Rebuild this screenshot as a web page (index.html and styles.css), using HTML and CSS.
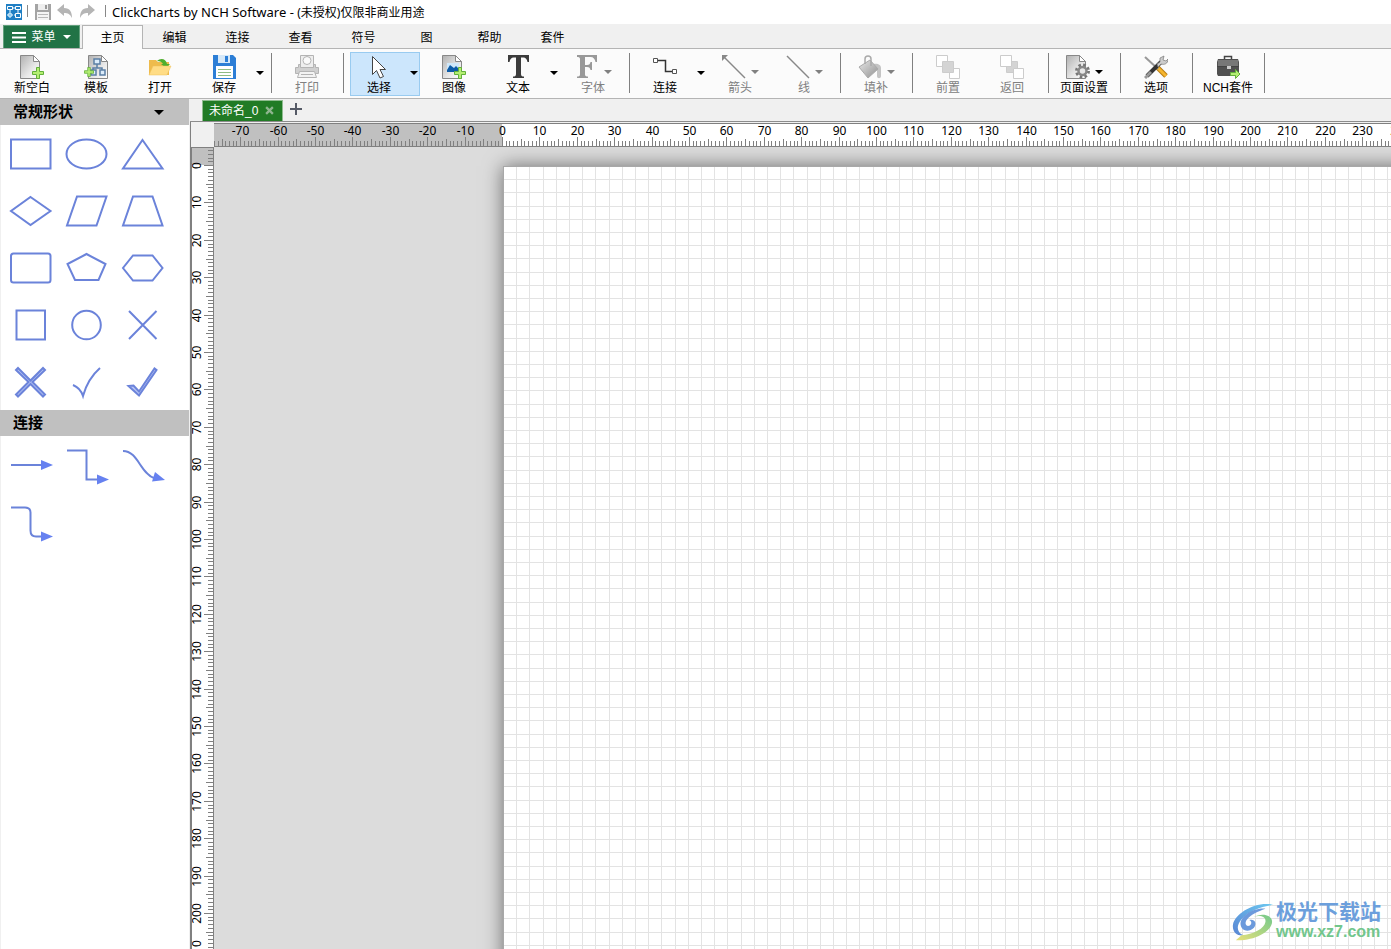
FILE: index.html
```html
<!DOCTYPE html>
<html lang="zh-CN">
<head>
<meta charset="utf-8">
<title>ClickCharts by NCH Software</title>
<link rel="stylesheet" href="styles.css">
</head>
<body>
<svg class="defs" aria-hidden="true">
  <defs>
    <linearGradient id="paper" x1="0" y1="0" x2="1" y2="1"><stop offset="0" stop-color="#b0b0b0"/><stop offset=".6" stop-color="#e8e8e8"/><stop offset="1" stop-color="#ffffff"/></linearGradient>
    <linearGradient id="metal" x1="0" y1="0" x2="1" y2="1"><stop offset="0" stop-color="#e8e8e8"/><stop offset="1" stop-color="#909090"/></linearGradient>
    <linearGradient id="swirl" x1="0" y1="1" x2="1" y2="0"><stop offset="0" stop-color="#5a86d4"/><stop offset="1" stop-color="#6cc8f0"/></linearGradient>
    <linearGradient id="leaf" x1="0" y1="1" x2="1" y2="0"><stop offset="0" stop-color="#e8e07a"/><stop offset="1" stop-color="#72c98c"/></linearGradient>
    <symbol id="plus" viewBox="0 0 12 12"><path d="M4.500 .5h3v4h4v3h-4v4h-3v-4h-4v-3h4z" fill="#b4ee72" stroke="#62b03a"/></symbol>
    <symbol id="caret" viewBox="0 0 8 4"><path d="M0 0h8L4 4z" fill="currentColor"/></symbol>
    <symbol id="page" viewBox="0 0 24 24"><path d="M1.500 .5h13l6 6v17h-19z" fill="url(#paper)" stroke="#888"/><path d="M14.500 .5v6h6z" fill="#fff" stroke="#888"/></symbol>
  </defs>
</svg>

<header class="titlebar">
  <svg class="app-icon" viewBox="0 0 16 16"><path d="M0 0h16v16H0z" fill="#1f7fc4"/><g fill="none" stroke="#fff"><path d="M1.500 2.500h5v3h-5zM9.500 2.500h5v3h-5zM9.500 9.500h5v4h-5zM6.500 4h3M4 6v2M12 6v3M8 11h1"/><path d="M4 8.500L6.500 11 4 13.500 1.500 11z" fill="#8cd0f5"/></g></svg>
  <span class="bar"></span>
  <button class="quick" aria-label="保存"><svg viewBox="0 0 18 18"><path d="M1 1h16v16H1z" fill="#a4a4a4"/><path d="M4 1h10v6H4z" fill="#eee"/><path d="M11 2h2v4h-2z" fill="#999"/><path d="M3 9h12v8H3z" fill="#f4f4f4"/><path d="M4 11.500h10M4 14.500h10" stroke="#b8b8b8"/></svg></button>
  <button class="quick" aria-label="撤消"><svg viewBox="0 0 18 18"><path d="M1 7l7-6v4c6 0 8 4 8 10-2-4-4-5-8-5v3z" fill="#b5b5b5"/></svg></button>
  <button class="quick" aria-label="重做"><svg viewBox="0 0 18 18"><path d="M17 7l-7-6v4C4 5 2 9 2 15c2-4 4-5 8-5v3z" fill="#b5b5b5"/></svg></button>
  <span class="bar"></span>
  <h1 class="title">ClickCharts by NCH Software - <span class="license">(未授权)仅限非商业用途</span></h1>
</header>

<nav class="menubar">
  <button class="menu-main"><svg class="burger" viewBox="0 0 14 11"><path d="M0 1h14M0 5.500h14M0 10h14" stroke="#fff" stroke-width="2"/></svg>菜单<svg class="caret"><use href="#caret"/></svg></button>
  <button class="menu-tab current">主页</button>
  <button class="menu-tab">编辑</button>
  <button class="menu-tab">连接</button>
  <button class="menu-tab">查看</button>
  <button class="menu-tab">符号</button>
  <button class="menu-tab">图</button>
  <button class="menu-tab">帮助</button>
  <button class="menu-tab">套件</button>
</nav>

<div class="toolbar" role="toolbar">
  <button class="tool"><span class="icon-row"><svg class="icon"><use href="#page" x="-1"/><use href="#plus" x="12" y="12" width="12" height="12"/></svg></span>新空白</button>
  <button class="tool"><span class="icon-row"><svg class="icon"><use href="#page" x="3"/><g fill="#dcecfa" stroke="#5b7fa5" stroke-width="1.500"><path d="M13 9v4M9 16v-3h9v3" fill="none"/><path d="M10 4h6v5h-6zM7 15h5v5H7zM16 15h5v5h-5z"/></g><use href="#plus" x="0" y="12" width="10" height="10"/></svg></span>模板</button>
  <button class="tool"><span class="icon-row"><svg class="icon"><path d="M1 5h7l2 2h11v13H1z" fill="#eebb4c"/><path d="M9 6c3-3 9-3 10 3h3l-4 4-5-4h2c-1-2-3-3-6-3z" fill="#4fae2e"/><path d="M1 20l4-9h18l-4 9z" fill="#ffdc85" stroke="#efc05a" stroke-width=".5"/></svg></span>打开</button>
  <button class="tool"><span class="icon-row"><svg class="icon"><path d="M1 0h20l3 3v21H1z" fill="#2c7ed6"/><path d="M6 0h12v8H6z" fill="#d5e8f8"/><path d="M13 1h3v6h-3z" fill="#2c7ed6"/><path d="M4 11h17v12H4z" fill="#fff"/><path d="M6 14.500h13M6 17.500h13M6 20.500h13" stroke="#8fbc84"/></svg></span>保存</button>
  <button class="drop" aria-label="保存选项"><svg class="caret"><use href="#caret"/></svg></button>
  <span class="sep"></span>
  <button class="tool" disabled><span class="icon-row"><svg class="icon"><g stroke="#b4b4b4"><path d="M5.500 .5h13v12h-13z" fill="#eee"/><circle cx="12" cy="5.500" r="4" fill="#fafafa"/><path d="M.5 12.500h3v-3h2v3h13v-3h2v3h3v6H.5z" fill="#d0d0d0"/><path d="M4.500 16.500h15l2 6h-19z" fill="#f3f3f3"/><path d="M6 19.500h12"/></g></svg></span>打印</button>
  <span class="sep"></span>
  <div class="tool-pair selected">
    <button class="tool" aria-pressed="true"><span class="icon-row"><svg class="icon"><path d="M5.500 1.500v18l4-4 3.500 7.500 3.500-1.500-3.500-7h5.500z" fill="#fff" stroke="#444"/></svg></span>选择</button>
    <button class="drop" aria-label="选择选项"><svg class="caret"><use href="#caret"/></svg></button>
  </div>
  <button class="tool"><span class="icon-row"><svg class="icon"><use href="#page" x="-1"/><path d="M5 8h12v9H5z" fill="#cfe8fa"/><path d="M5 15l3-5 4 3 2-2 3 3v3H5z" fill="#0d5ca8"/><use href="#plus" x="12" y="12" width="12" height="12"/></svg></span>图像</button>
  <button class="tool"><span class="icon-row"><svg class="icon"><path d="M2 0h21v7h-1.500c-.5-3-2-4.500-4-4.500H15V19c0 2 1 2.500 3 2.500V23H7v-1.500c2 0 3-.5 3-2.500V2.500H7.500c-2 0-3.500 1.500-4 4.500H2z" fill="#3c3c3c"/></svg></span>文本</button>
  <button class="drop" aria-label="文本选项"><svg class="caret"><use href="#caret"/></svg></button>
  <button class="tool" disabled><span class="icon-row"><svg class="icon"><path d="M2 0h20v7h-1.500c-.5-3-2-5-5-5H10v8h2c2.500 0 3-1 3.500-3H17v8h-1.500c-.5-2-1-3-3.500-3h-2v7.500c0 1.500 1 2 3 2V23H2v-1.500c2 0 3-.5 3-2V4c0-1.500-1-2-3-2z" fill="#999"/></svg><svg class="caret"><use href="#caret"/></svg></span>字体</button>
  <span class="sep"></span>
  <button class="tool"><span class="icon-row"><svg class="icon"><path d="M4 5.500h8.500v11H20" fill="none" stroke="#333" stroke-width="1.500"/><path d="M.5 3.500h4v4h-4zM19.500 14.500h4v4h-4z" fill="#fff" stroke="#555"/></svg></span>连接</button>
  <button class="drop" aria-label="连接选项"><svg class="caret"><use href="#caret"/></svg></button>
  <button class="tool" disabled><span class="icon-row"><svg class="icon"><path d="M2 2l21 21" stroke="#888" stroke-width="1.500"/><path d="M0 0h6L0 6z" fill="#888"/></svg><svg class="caret"><use href="#caret"/></svg></span>箭头</button>
  <button class="tool" disabled><span class="icon-row"><svg class="icon"><path d="M1 1l22 22" stroke="#888" stroke-width="1.500"/></svg><svg class="caret"><use href="#caret"/></svg></span>线</button>
  <span class="sep"></span>
  <button class="tool" disabled><span class="icon-row"><svg class="icon"><path d="M15 9c5-1 8 1 8 4v8c0 3-4 3-4 0v-6z" fill="#c4c4c4"/><path d="M1 12L12 5l8 9-10 9z" fill="url(#metal)" stroke="#aaa"/><path d="M7 9V4c0-4 6-4 6 0v7" fill="none" stroke="#aaa" stroke-width="1.500"/></svg><svg class="caret"><use href="#caret"/></svg></span>填补</button>
  <span class="sep"></span>
  <button class="tool" disabled><span class="icon-row"><svg class="icon"><g fill="#fff" stroke="#ccc"><path d="M.5.5h11v11H.5zM13.500 13.500h10v10h-10z"/><path d="M6.500 6.500h11v11h-11z" fill="#d4d4d4"/></g></svg></span>前置</button>
  <button class="tool" disabled><span class="icon-row"><svg class="icon"><g fill="#fff" stroke="#ccc"><path d="M6.500 6.500h11v11h-11z" fill="#d4d4d4"/><path d="M.5.5h11v11H.5zM13.500 13.500h10v10h-10z"/></g></svg></span>返回</button>
  <span class="sep"></span>
  <button class="tool"><span class="icon-row"><svg class="icon"><use href="#page" x="-1"/><circle cx="16.500" cy="16" r="6" fill="none" stroke="#777" stroke-width="3" stroke-dasharray="2.500 2.200"/><circle cx="16.500" cy="16" r="4" fill="#e8e8e8" stroke="#888" stroke-width="2.500"/></svg><svg class="caret"><use href="#caret"/></svg></span>页面设置</button>
  <span class="sep"></span>
  <button class="tool"><span class="icon-row"><svg class="icon"><path d="M13 12l9 9" stroke="#b57a10" stroke-width="5"/><path d="M13 12l9 9" stroke="#f5b52e" stroke-width="3"/><path d="M1 2l13 12" stroke="#999" stroke-width="2"/><path d="M3 21L17 7" stroke="#333" stroke-width="4"/><path d="M13 9l3-2V3l4-2-1 4 3 1 2-2c0 5-4 6-7 5l-3 3z" fill="#ccc" stroke="#777" stroke-width=".7"/><path d="M1 23l6-6" stroke="#999" stroke-width="3"/></svg></span>选项</button>
  <span class="sep"></span>
  <button class="tool"><span class="icon-row"><svg class="icon"><path d="M8.500 5V1.500h7V5" fill="none" stroke="#444" stroke-width="1.500"/><path d="M2 4h20l1 3v12l-2 2H2l-1-2V7z" fill="#505050"/><path d="M2 5h20v6H2z" fill="#777"/><path d="M1 11.500h22" stroke="#444"/><path d="M11 11h4v3h-4z" fill="#ccc"/><path d="M14.500 17.500h5v-3l4.500 4.500-4.500 4.500v-3h-5z" fill="#b4ee72" stroke="#62b03a"/></svg></span>NCH套件</button>
  <span class="sep"></span>
</div>

<main class="workspace">
  <aside class="palette">
    <h2 class="palette-head">常规形状<svg class="caret" viewBox="0 0 8 4"><use href="#caret"/></svg></h2>
    <div class="shapes">
      <button class="shape" aria-label="矩形"><svg><path d="M9 14.500h39.500v29H9z"/></svg></button>
      <button class="shape" aria-label="椭圆"><svg><ellipse cx="28.500" cy="29" rx="20" ry="14.500"/></svg></button>
      <button class="shape" aria-label="三角形"><svg><path d="M28.500 15L48.500 43.500H9z"/></svg></button>
      <button class="shape" aria-label="菱形"><svg><path d="M28.500 15l20 14-20 14L9 29z"/></svg></button>
      <button class="shape" aria-label="平行四边形"><svg><path d="M19 14.500h29.500l-10 29H9z"/></svg></button>
      <button class="shape" aria-label="梯形"><svg><path d="M19 14.500h19.500l10 29H9z"/></svg></button>
      <button class="shape" aria-label="圆角矩形"><svg><rect x="9" y="14.500" width="39.500" height="29" rx="2.500"/></svg></button>
      <button class="shape" aria-label="五边形"><svg><path d="M28.500 15l19 10-7 16H17L9.500 25z"/></svg></button>
      <button class="shape" aria-label="六边形"><svg><path d="M19 16.500h19.500L48.500 29l-10 12.500H19L9 29z"/></svg></button>
      <button class="shape" aria-label="正方形"><svg><path d="M14.500 14.500h28.500v29H14.500z"/></svg></button>
      <button class="shape" aria-label="圆形"><svg><circle cx="28.500" cy="29" r="14.300"/></svg></button>
      <button class="shape" aria-label="交叉"><svg><path d="M15 15l27.500 28M42.500 15L15 43"/></svg></button>
      <button class="shape" aria-label="粗交叉"><svg class="dense"><path d="M16 15l12.500 12.500L41 15l2 2-12.500 12L43 41.500l-2 2L28.500 31 16 43.500l-2-2L26.500 29 14 17z"/></svg></button>
      <button class="shape" aria-label="勾"><svg><path d="M15 32c5 2 8 5 10 11 3-11 9-21 17-28"/></svg></button>
      <button class="shape" aria-label="粗勾"><svg class="dense"><path d="M14.500 33l5-.5 5.500 6 15.500-23 2 1.500-17.500 25.500z"/></svg></button>
    </div>
    <h2 class="palette-head">连接</h2>
    <div class="shapes">
      <button class="shape" aria-label="直线箭头"><svg><path d="M9 29h31"/><path class="head" d="M39 24l12 5-12 5z"/></svg></button>
      <button class="shape" aria-label="折线箭头"><svg><path d="M9 14.500h19.500v29H40"/><path class="head" d="M39 38.500l12 5-12 5z"/></svg></button>
      <button class="shape" aria-label="曲线箭头"><svg><path d="M9 15c15 0 17 22 31 27"/><path class="head" d="M41 36l10 8-13 1.500z"/></svg></button>
      <button class="shape" aria-label="圆角折线箭头"><svg><path d="M9 14.500h14q5.500 0 5.500 5v18q0 6 5.500 6h6"/><path class="head" d="M39 38.500l12 5-12 5z"/></svg></button>
    </div>
  </aside>

  <section class="document">
    <div class="doc-tabs">
      <div class="doc-tab"><span>未命名_0</span><button class="close" aria-label="关闭"><svg viewBox="0 0 8 8"><path d="M1 1l6 6M7 1L1 7" stroke="#8fb58f" stroke-width="2"/></svg></button></div>
      <button class="add" aria-label="新建"><svg viewBox="0 0 12 12"><path d="M0 6h12M6 0v12" stroke="#555a66" stroke-width="2"/></svg></button>
    </div>
    <div class="sheet">
      <div class="corner"></div>
      <div class="ruler-h"><svg id="ruler-h"></svg></div>
      <div class="ruler-v"><svg id="ruler-v"></svg></div>
      <div class="canvas">
        <div class="paper"><svg id="grid"></svg></div>
      </div>
    </div>
    <div class="watermark">
      <svg class="mark" viewBox="0 0 44 40"><path d="M43 2C25-2 3 11 1 23c-1 8 5 12 11 11-7-3-8-10-2-17C17 9 29 4 43 2z" fill="url(#swirl)"/><path d="M35 6C20 5 8 15 9 23c1 7 9 8 14 3 4-5 0-10-5-8 3 1 3 5 0 6-4 1-5-4-2-7 4-5 11-8 19-11z" fill="#6c9adc"/><path d="M22 15c7-3 14-1 13 5-1 7-13 13-25 14l-6 5c18 1 37-8 38-19 0-8-11-10-20-5z" fill="url(#leaf)"/></svg>
      <div><div class="mark-name">极光下载站</div><div class="mark-url">www.xz7.com</div></div>
    </div>
  </section>
</main>
<script src="app.js"></script>
</body>
</html>
```

FILE: styles.css
```css
* { box-sizing: border-box; }
body {
  margin: 0;
  height: 100vh;
  display: flex;
  flex-direction: column;
  overflow: hidden;
  background: #f0f0f0;
  color: #000;
  font: 12px/16px "Liberation Sans", "Noto Sans CJK SC", sans-serif;
}
button {
  margin: 0;
  padding: 0;
  border: 0;
  background: none;
  color: inherit;
  font: inherit;
}
svg { display: block; }
h1, h2 { margin: 0; }
.defs { position: absolute; width: 0; height: 0; }
.caret { width: 8px; height: 4px; flex: none; }

.titlebar {
  display: flex;
  align-items: center;
  height: 24px;
  padding-left: 6px;
  background: #fff;
}
.app-icon { width: 16px; height: 16px; }
.bar { width: 1px; height: 12px; margin: 0 6px 2px 5px; background: #888; }
.quick { width: 18px; margin-right: 4px; }
.quick svg { width: 18px; height: 18px; }
.title {
  padding-top: 1px;
  font: 13px/16px "Noto Sans", "Noto Sans CJK SC", sans-serif;
  white-space: nowrap;
}
.license { font-size: 12px; }

.menubar {
  display: flex;
  height: 25px;
  padding: 1px 0 0 3px;
  border-bottom: 1px solid #b4b4b4;
}
.menu-main {
  display: flex;
  align-items: center;
  justify-content: center;
  gap: 5px;
  width: 77px;
  margin-right: 2px;
  background: #217346;
  border: 1px solid #63a07d;
  border-bottom: 0;
  color: #fff;
}
.burger { width: 14px; height: 11px; }
.menu-main .caret { margin-left: 2px; }
.menu-tab { width: 63px; padding-top: 2px; }
.menu-tab.current {
  width: 61px;
  height: 24px;
  padding-top: 0;
  background: #fbfbfb;
  border: 1px solid #b4b4b4;
  border-bottom: 0;
}

.toolbar {
  display: flex;
  height: 50px;
  padding-top: 3px;
  background: #fbfbfb;
  border-bottom: 1px solid #b4b4b4;
}
.tool {
  display: flex;
  flex: none;
  flex-direction: column;
  align-items: center;
  gap: 1px;
  width: 64px;
  height: 44px;
  padding-top: 3px;
  white-space: nowrap;
}
.tool:disabled { color: #808080; }
.icon-row { display: flex; align-items: center; gap: 5px; }
.icon-row .caret { margin-top: 10px; }
.icon { width: 24px; height: 24px; }
.drop {
  display: flex;
  align-items: center;
  width: 11px;
  height: 42px;
}
.sep { flex: none; width: 1px; height: 40px; margin: 1px 3px 0 4px; background: #808080; }
.tool-pair { display: flex; flex: none; margin: 0 2px 0 3px; }
.tool-pair .tool { width: 58px; }
.selected {
  width: 70px;
  height: 44px;
  background: #cce6fc;
  box-shadow: inset 0 0 0 1px #99cbf0;
}
.selected .drop { margin-left: 2px; }

.workspace { display: flex; flex: 1; min-height: 0; }
.palette {
  flex: none;
  width: 190px;
  background: #fff;
  border-left: 1px solid #f0f0f0;
  border-right: 1px solid #f0f0f0;
}
.palette-head {
  display: flex;
  align-items: center;
  justify-content: space-between;
  height: 26px;
  margin-left: -1px;
  padding: 0 25px 0 13px;
  background: #c0c0c0;
  font-size: 15px;
  font-weight: bold;
}
.shapes { display: grid; grid-template-columns: repeat(3, 56px); padding-left: 1px; }
.palette-head .caret { width: 10px; height: 5px; }
.shape { width: 56px; height: 57px; }
.shape svg {
  width: 56px;
  height: 57px;
  fill: none;
  stroke: #6b83da;
  stroke-width: 2px;
}
.shape .dense { fill: #b9c6f5; }
.shape .head { fill: #6681f0; stroke: none; }

.document {
  position: relative;
  display: flex;
  flex: 1;
  flex-direction: column;
  min-width: 0;
}
.doc-tabs {
  display: flex;
  height: 23px;
  padding: 1px 0 0 12px;
  border-bottom: 1px solid #8c8c8c;
}
.doc-tab {
  display: flex;
  align-items: center;
  justify-content: space-between;
  width: 81px;
  padding: 0 8px 1px 6px;
  background: #217b25;
  border: 1px solid #8fbc8f;
  border-bottom: 0;
  color: #fff;
}
.close svg { width: 9px; height: 9px; }
.add { margin-left: 7px; padding-bottom: 3px; }
.add svg { width: 12px; height: 12px; }
.sheet {
  display: grid;
  flex: 1;
  grid-template: 25px 1fr / 24px 1fr;
  min-height: 0;
}
.corner { border-left: 1px solid #808080; }
.ruler-h, .ruler-v {
  overflow: hidden;
  min-width: 0;
  min-height: 0;
  background: #fff;
}
.ruler-h { margin-top: 1px; border-top: 1px solid #808080; border-bottom: 1px solid #808080; }
.ruler-v { border-top: 1px solid #808080; border-right: 1px solid #808080; border-left: 2px solid #808080; }
.ruler-h svg { width: 100%; height: 22px; }
.ruler-v svg { width: 21px; height: 100%; }
.canvas {
  overflow: hidden;
  min-width: 0;
  min-height: 0;
  padding: 19px 0 0 289px;
  background: #dcdcdc;
}
.paper {
  width: calc(100% + 30px);
  height: calc(100% + 30px);
  background: #fff;
  border-top: 1px solid #a8a8a8;
  border-left: 1px solid #a8a8a8;
  box-shadow: 0 0 18px rgba(0, 0, 0, .5);
}
#grid { width: 100%; height: 100%; }
#grid path { stroke: #e3e3e3; }
.tick { stroke: #808080; }
.past { fill: #c0c0c0; }
.num {
  fill: #000;
  font-family: "Noto Sans", sans-serif;
  text-anchor: middle;
}

.watermark {
  position: absolute;
  right: 10px;
  bottom: 7px;
  display: flex;
  gap: 2px;
}
.mark { width: 42px; height: 40px; margin-top: 4px; }
.mark-name {
  color: #6c9fdc;
  font: bold 21px/24px "Noto Sans CJK SC", sans-serif;
}
.mark-url {
  color: #72c68c;
  font: bold 16px/20px "Liberation Sans", sans-serif;
}
```

FILE: app.js
```js
const NS = "http://www.w3.org/2000/svg";
const UNIT = 3.74;
const GRID = 13.2;

function add(parent, name, attrs, text) {
  const el = document.createElementNS(NS, name);
  for (const key in attrs) el.setAttribute(key, attrs[key]);
  if (text !== undefined) el.textContent = text;
  parent.appendChild(el);
}

function tickLength(i) {
  if (i % 10 === 0) return 9;
  return i % 5 === 0 ? 7 : 5;
}

function ruler(id, origin, vertical) {
  const svg = document.getElementById(id);
  svg.replaceChildren();
  const box = svg.getBoundingClientRect();
  const length = vertical ? box.height : box.width;
  const edge = vertical ? 21 : 22;
  add(svg, "rect", vertical
    ? { class: "past", width: edge, height: origin }
    : { class: "past", width: origin, height: edge });
  let d = "";
  const first = Math.ceil(-origin / UNIT);
  const last = Math.floor((length + 12 - origin) / UNIT);
  for (let i = first; i <= last; i++) {
    const p = Math.round(origin + i * UNIT) + 0.5;
    const size = tickLength(i);
    d += vertical ? `M${edge} ${p}h${-size}` : `M${p} ${edge}v${-size}`;
    if (i % 10 === 0 && p > 12) {
      add(svg, "text", vertical
        ? { class: "num", transform: `translate(9 ${p}) rotate(-90)` }
        : { class: "num", x: p, y: 11 }, i);
    }
  }
  add(svg, "path", { class: "tick", d });
}

function grid() {
  const svg = document.getElementById("grid");
  svg.replaceChildren();
  const { width, height } = svg.getBoundingClientRect();
  let d = "";
  for (let i = 1; i * GRID < Math.max(width, height); i++) {
    const p = Math.round(i * GRID) - 0.5;
    d += `M${p} 0V${height}M0 ${p}H${width}`;
  }
  add(svg, "path", { d });
}

function draw() {
  ruler("ruler-h", 288, false);
  ruler("ruler-v", 17, true);
  grid();
}

draw();
window.addEventListener("resize", draw);
```
